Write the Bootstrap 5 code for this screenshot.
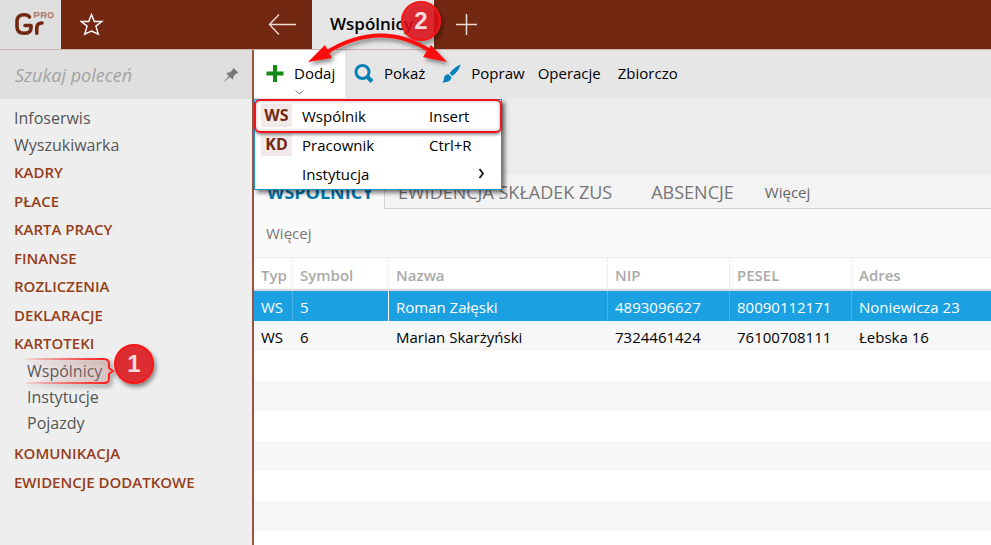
<!DOCTYPE html>
<html lang="pl">
<head>
<meta charset="utf-8">
<meta name="viewport" content="width=device-width, initial-scale=1">
<title>Wspólnicy</title>
<link rel="stylesheet" href="https://cdn.jsdelivr.net/npm/bootstrap@5.3.0/dist/css/bootstrap.min.css">
<style>
:root { --brown: #732812; --edge: #965543; --blue: #0078ae; }
body { font-family: "Open Sans", "Noto Sans", sans-serif; font-size: 15px; line-height: 20px; color: #000; background: #fff; }
a { text-decoration: none; color: inherit; }
button { font-size: 15px; }
svg { display: block; }

.topbar { height: 50px; background: var(--brown); border-bottom: 1px solid #cbb4ae; }
.brand { width: 61px; background: #dfdfdf; }
.icon-btn { width: 61px; border: 0; background: none; }
.back-btn { width: 60px; margin-left: 130px; }
.page-tab { width: 122px; background: #e6e6e6; font-size: 17px; font-weight: 600; padding: 0 0 2px 18px; }

.side { width: 254px; background: #eee; border-right: 2px solid var(--edge); }
.finder { height: 49px; background: #dfdfdf; padding: 0 14px 0 15px; }
.finder input { font-size: 18px; font-style: italic; min-width: 0; }
.finder input::placeholder { color: #a3a3a3; }
.menu-plain { padding: 6px 0 0 14px; color: #555; font-size: 16px; line-height: 27px; }
.menu-main { padding-left: 14px; display: grid; grid-auto-rows: 28px 29px; align-items: center; color: #963e19; font-weight: 600; font-size: 15px; line-height: 18px; }
.menu-main a { padding-bottom: 2px; }
.menu-sub { padding: 0 0 4px 27px; color: #555; font-size: 16px; line-height: 26px; }

.toolbar { height: 48px; background: #e6e6e6; }
.tool { border: 0; background: none; color: #000; gap: 10px; padding: 0 9px 2px; height: 48px; white-space: nowrap; }
.tool-add { background: #fff; width: 91px; padding-left: 12px; }
.chev { position: absolute; left: 41px; top: 40px; }
.menu-pop { position: absolute; z-index: 5; left: 0; top: 49px; width: 248px; background: #fff; border: 1px solid #1e96d2; padding: 1px 0; box-shadow: 3px 3px 4px rgba(0,0,0,.5); }
.menu-pop button { height: 29px; border: 0; background: none; padding: 0; width: 100%; text-align: left; }
.code { width: 31px; height: 23px; line-height: 23px; margin: 0 10px 0 6px; background: #f1eae8; color: var(--brown); font-size: 16px; font-weight: 700; text-align: center; }
.code-none { background: none; }
.menu-name { width: 127px; }
.marked { position: absolute; left: -1px; right: -1px; top: -1px; height: 34px; border: 2px solid #f0141c; border-radius: 6px; box-shadow: 0 2px 3px rgba(0,0,0,.4), inset 0 0 4px rgba(0,0,0,.25); pointer-events: none; }

.band { height: 76px; background: #ececec; }
.views { height: 35px; background: #f3f3f3; border-bottom: 1px solid #d2d2d2; color: #777; font-size: 18px; }
.views a { line-height: 37px; white-space: nowrap; }
.view-on { width: 131px; height: 35px; padding-left: 13px; background: #fafafa; border-right: 1px solid #d2d2d2; color: var(--blue); font-weight: 700; }
.view-next { margin-left: 13px; }
.view-third { margin-left: 39px; }
.views .view-more { margin-left: 31px; font-size: 15px; color: #666; }
.subbar { height: 49px; background: #fafafa; border-bottom: 1px solid #eee; padding-left: 12px; color: #777; }

.grid-wrap { background: repeating-linear-gradient(#fff 0 30px, #f7f7f7 30px 60px); background-position: 0 33px; background-size: 100% 60px; overflow: hidden; }
.records { width: 100%; table-layout: fixed; border-collapse: separate; border-spacing: 0; }
.records th { height: 33px; padding: 3px 0 0 7px; background: #fff; color: #aaa; font-weight: 600; border-right: 1px dotted #ddd; border-bottom: 2px solid #d8d8d8; }
.records td { height: 30px; padding: 1px 0 0 7px; white-space: nowrap; }
.records .chosen td { background: #1ba1e2; color: #fff; border-right: 1px solid #45b2e8; }
.records .chosen .cursor { border-right-color: #fff; }
.records th:last-child, .records .chosen td:last-child { border-right: 0; }
.c-typ { width: 39px; } .c-sym { width: 96px; } .c-name { width: 219px; } .c-num { width: 122px; }

.note { position: absolute; z-index: 9; pointer-events: none; overflow: visible; }
.note-two { left: 300px; top: 0; }
.note-one { left: 25px; top: 342px; }
.note text { font-family: "Liberation Sans", sans-serif; font-weight: 700; font-size: 24px; fill: #f8dcdc; text-anchor: middle; }
</style>
<script src="https://cdn.jsdelivr.net/npm/bootstrap@5.3.0/dist/js/bootstrap.bundle.min.js"></script>
</head>
<body class="d-flex flex-column vh-100 overflow-hidden position-relative">
<header class="topbar d-flex flex-shrink-0">
  <a href="#" class="brand" aria-label="Gr PRO">
    <svg width="61" height="49" fill="none" stroke="#732812" stroke-width="3.600" stroke-linecap="round">
      <path d="M29.500 17Q28 14.800 24 14.800Q17 14.800 17 21.500V26.500Q17 33.300 24 33.300Q31 33.300 31 28V25.500H25" stroke-linejoin="round"/>
      <path d="M36.800 33.300V28Q36.800 23 42 23"/>
      <g stroke="#b08274" stroke-width="1.500" stroke-linecap="butt"><path d="M34.500 18V12.700H37.500Q39 12.700 39 14.200T37.500 15.800H35M41.500 18V12.700H44.500Q46 12.700 46 14.200T44.500 15.600H42M44.500 15.800L46 18"/><rect x="48.300" y="12.700" width="4.600" height="4.800" rx="2"/></g>
    </svg>
  </a>
  <button class="icon-btn p-0 d-flex align-items-center justify-content-center" aria-label="Ulubione">
    <svg width="24" height="24" fill="none" stroke="#fff" stroke-width="1.400"><path d="M11.500 1.500L14.300 8.500H21.800L15.900 13.100L18.300 21.200L11.500 18L4.700 21.200L7.100 13.100L1.200 8.500H8.700Z"/></svg>
  </button>
  <button class="icon-btn back-btn p-0 d-flex align-items-center justify-content-center" aria-label="Wstecz">
    <svg width="28" height="22" fill="none" stroke="#ead9d4" stroke-width="1.400"><path d="M28 10.500H1.500M11 0.500L1.500 10.500L11 20.500"/></svg>
  </button>
  <a href="#" class="page-tab d-flex align-items-center">Wspólnicy</a>
  <button class="icon-btn p-0 d-flex align-items-center justify-content-center" aria-label="Nowa karta">
    <svg width="24" height="22" stroke="#ead9d4" stroke-width="1.500"><path d="M3 10.500H24M13.500 0V21"/></svg>
  </button>
</header>

<div class="d-flex flex-fill overflow-hidden">
  <aside class="side flex-shrink-0">
    <div class="finder d-flex align-items-center">
      <input type="search" class="border-0 bg-transparent p-0 flex-fill" placeholder="Szukaj poleceń" aria-label="Szukaj poleceń">
      <svg width="15" height="16" fill="#777"><path d="M9.500 1L14.300 5.500L13 6.700L12.300 6.300L9.400 9.500Q9.600 11.300 8.500 12.500L5.800 10L0.500 14.800L0.200 14.500L4.800 9L2.300 6.500Q3.500 5.400 5.600 5.600L8.700 2.900L8.300 2.200Z"/></svg>
    </div>
    <nav>
      <div class="menu-plain d-flex flex-column"><a href="#">Infoserwis</a><a href="#">Wyszukiwarka</a></div>
      <div class="menu-main"><a href="#">KADRY</a><a href="#">PŁACE</a><a href="#">KARTA PRACY</a><a href="#">FINANSE</a><a href="#">ROZLICZENIA</a><a href="#">DEKLARACJE</a><a href="#">KARTOTEKI</a></div>
      <div class="menu-sub d-flex flex-column"><a href="#">Wspólnicy</a><a href="#">Instytucje</a><a href="#">Pojazdy</a></div>
      <div class="menu-main"><a href="#">KOMUNIKACJA</a><a href="#">EWIDENCJE DODATKOWE</a></div>
    </nav>
  </aside>

  <main class="flex-fill d-flex flex-column overflow-hidden">
    <div class="toolbar d-flex flex-shrink-0 position-relative">
      <button class="tool tool-add d-flex align-items-center" aria-expanded="true">
        <svg width="18" height="17" fill="#138a13"><path d="M7 0H11V6.500H17.500V10.500H11V17H7V10.500H0.500V6.500H7Z"/></svg>Dodaj
        <svg class="chev" width="9" height="5" fill="none" stroke="#777"><path d="M0.500 0.500Q3 3.500 4.500 3.500T8.500 0.500"/></svg>
      </button>
      <button class="tool d-flex align-items-center">
        <svg width="20" height="20" fill="none" stroke="#0880ba"><circle cx="8.500" cy="9" r="6.500" stroke-width="3"/><path d="M13 13.500L18 18.500" stroke-width="4"/></svg>Pokaż
      </button>
      <button class="tool ps-2 d-flex align-items-center">
        <svg width="19" height="19" fill="#0880ba"><path d="M18.500 0.500Q17.500 6.500 10.500 12L7.500 9.200Q13 2.500 18.500 0.500ZM6.500 10.200L9.500 13Q9.500 18 1 18.500H0Q2.200 17 2 14Q2.500 10.300 6.500 10.200Z"/></svg>Popraw
      </button>
      <button class="tool px-1">Operacje</button>
      <button class="tool ms-1">Zbiorczo</button>
      <div class="menu-pop" role="menu">
        <button class="d-flex align-items-center" role="menuitem"><span class="code">WS</span><span class="menu-name">Wspólnik</span>Insert</button>
        <button class="d-flex align-items-center" role="menuitem"><span class="code">KD</span><span class="menu-name">Pracownik</span>Ctrl+R</button>
        <button class="d-flex align-items-center" role="menuitem"><span class="code code-none"></span><span class="menu-name">Instytucja</span><svg class="ms-auto me-3" width="8" height="12" fill="none" stroke="#111" stroke-width="1.800"><path d="M2.500 1L6 5.500L2.500 10"/></svg></button>
        <div class="marked"></div>
      </div>
    </div>
    <div class="band flex-shrink-0"></div>
    <nav class="views d-flex flex-shrink-0">
      <a href="#" class="view-on">WSPÓLNICY</a><a href="#" class="view-next">EWIDENCJA SKŁADEK ZUS</a><a href="#" class="view-third">ABSENCJE</a><a href="#" class="view-more">Więcej</a>
    </nav>
    <div class="subbar d-flex align-items-center flex-shrink-0"><a href="#">Więcej</a></div>
    <div class="grid-wrap flex-fill">
      <table class="records">
        <colgroup><col class="c-typ"><col class="c-sym"><col class="c-name"><col class="c-num"><col class="c-num"><col></colgroup>
        <thead><tr><th>Typ</th><th>Symbol</th><th>Nazwa</th><th>NIP</th><th>PESEL</th><th>Adres</th></tr></thead>
        <tbody>
          <tr class="chosen"><td>WS</td><td class="cursor">5</td><td>Roman Załęski</td><td>4893096627</td><td>80090112171</td><td>Noniewicza 23</td></tr>
          <tr><td>WS</td><td>6</td><td>Marian Skarżyński</td><td>7324461424</td><td>76100708111</td><td>Łebska 16</td></tr>
        </tbody>
      </table>
    </div>
  </main>
</div>

<svg class="note note-two" width="160" height="70" aria-hidden="true">
  <defs><filter id="soft" x="-20%" y="-20%" width="150%" height="150%"><feDropShadow dx="2" dy="3" stdDeviation="2" flood-opacity=".45"/></filter></defs>
  <g filter="url(#soft)">
    <path d="M24 54Q80 18 132 52" fill="none" stroke="#fb0d0d" stroke-width="4"/>
    <path d="M8 62L25 45L32 58ZM147 62L131 45L123 57Z" fill="#fb0d0d"/>
    <circle cx="121" cy="21" r="19" fill="#e0141c" fill-opacity=".82" stroke="#f51414" stroke-width="2"/>
  </g>
  <text x="121" y="29">2</text>
</svg>
<svg class="note note-one" width="135" height="48" aria-hidden="true">
  <defs>
    <linearGradient id="fade"><stop offset="0" stop-color="#f22" stop-opacity=".1"/><stop offset=".9" stop-color="#f22"/></linearGradient>
    <linearGradient id="tint"><stop offset="0" stop-color="#d88" stop-opacity="0"/><stop offset="1" stop-color="#c88" stop-opacity=".3"/></linearGradient>
  </defs>
  <g filter="url(#soft)">
    <path d="M1 17H79Q84 17 84 22V26L88 29L84 32V37Q84 41 79 41H1" fill="url(#tint)" stroke="url(#fade)" stroke-width="2"/>
    <circle cx="109" cy="22" r="19" fill="#dc2d32" stroke="#fa1414" stroke-width="2"/>
  </g>
  <text x="109" y="30">1</text>
</svg>
</body>
</html>
